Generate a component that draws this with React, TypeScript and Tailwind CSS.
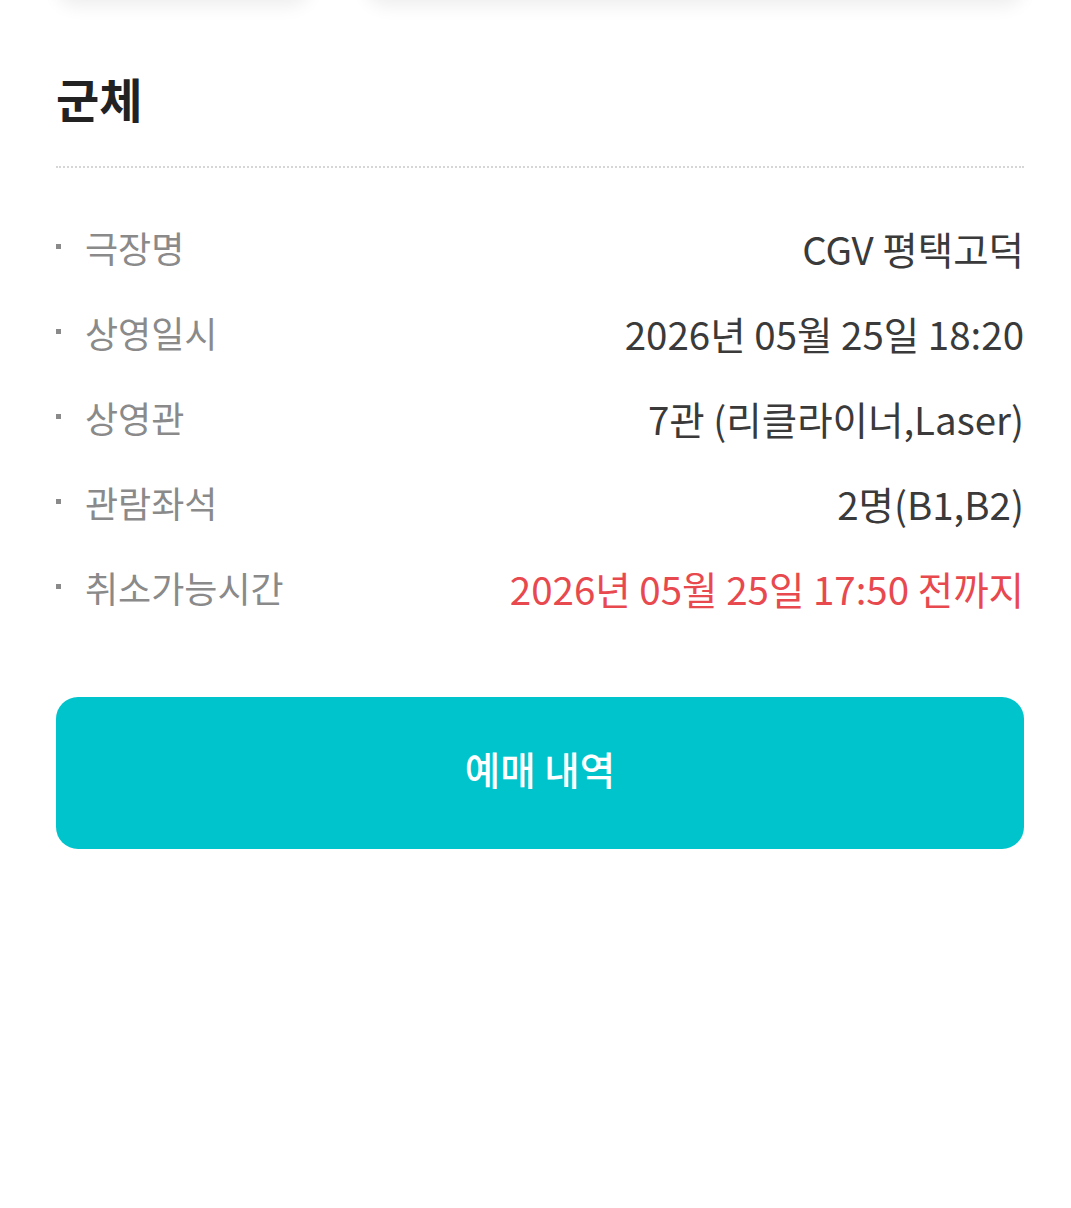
import React from 'react';

const rows: { label: string; value: string; danger?: boolean }[] = [
  { label: '극장명', value: 'CGV 평택고덕' },
  { label: '상영일시', value: '2026년 05월 25일 18:20' },
  { label: '상영관', value: '7관 (리클라이너,Laser)' },
  { label: '관람좌석', value: '2명(B1,B2)' },
  { label: '취소가능시간', value: '2026년 05월 25일 17:50 전까지', danger: true },
];

const App: React.FC = () => {
  return (
    <div
      className="min-h-[1208px] w-full bg-white overflow-hidden"
      style={{ fontFamily: '"Noto Sans CJK KR", "Noto Sans", sans-serif' }}
    >
      {/* cards cut off above the fold */}
      <div className="flex gap-[56px] pl-[56px] pr-[47px]">
        <div className="-mt-[80px] h-[80px] w-[254px] rounded-[20px] bg-white shadow-[0_6px_18px_rgba(0,0,0,0.07)]" />
        <div className="-mt-[80px] h-[80px] flex-1 rounded-[20px] bg-white shadow-[0_6px_18px_rgba(0,0,0,0.07)]" />
      </div>

      <div className="pl-[56px] pr-[47px]">
        <h2 className="pt-[68px] text-[47px] leading-[60px] font-bold text-[#222]">군체</h2>
        <div className="mt-[38px] border-t-2 border-dotted border-[#d6d6d6]" />

        <ul className="pt-[38px] pb-[2px]">
          {rows.map((row) => (
            <li key={row.label} className="flex h-[85px] items-center justify-between">
              <div className="flex items-center -mt-[4px]">
                <span className="block h-[5px] w-[5px] bg-[#8a8a8a]" />
                <span className="ml-[24px] text-[36px] leading-none text-[#8a8a8a]">{row.label}</span>
              </div>
              <span
                className={`text-[38.5px] leading-none ${row.danger ? 'text-[#e8494f]' : 'text-[#3a3a3a]'}`}
              >
                {row.value}
              </span>
            </li>
          ))}
        </ul>

        <button
          type="button"
          className="mt-[64px] flex h-[152px] w-full items-center justify-center rounded-[22px] bg-[#00c4cc] pb-[8px] text-[38.5px] font-medium text-white"
        >
          예매 내역
        </button>
      </div>
    </div>
  );
};

export default App;
